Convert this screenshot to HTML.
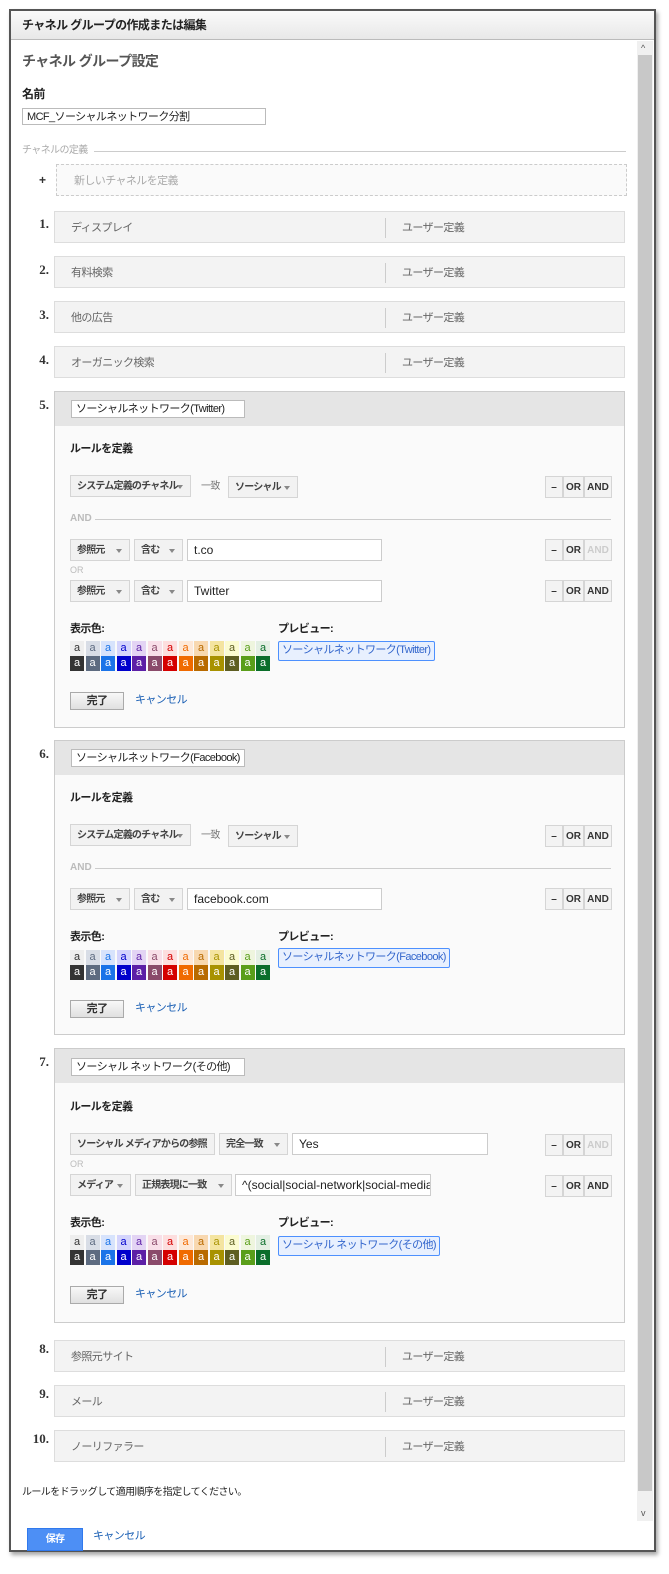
<!DOCTYPE html><html><head><meta charset="utf-8"><style>
*{box-sizing:border-box;margin:0;padding:0}
body{width:669px;height:1574px;background:#fff;font-family:"Liberation Sans","Noto Sans CJK JP",sans-serif;font-size:11px;line-height:1.15;color:#333;position:relative;overflow:hidden;letter-spacing:-0.6px}
.a{position:absolute;white-space:nowrap}
.dlg{left:9px;top:9px;width:647px;height:1543px;border:2px solid #555;background:#fff;box-shadow:2px 3px 4px rgba(0,0,0,.35)}
.hdr{left:11px;top:11px;width:643px;height:29px;background:linear-gradient(#fafafa,#e8e8e8);border-bottom:1px solid #bbb;font-weight:bold;font-size:12px;padding:8px 0 0 11px;color:#222}
.row{left:54px;width:571px;height:32px;background:#f3f3f3;border:1px solid #ddd;color:#666;font-size:11px}
.row .n{position:absolute;left:16px;top:10px}
.row .s{position:absolute;left:330px;top:6px;height:20px;border-left:1px solid #ccc}
.row .u{position:absolute;left:347px;top:10px}
.num{font-family:"Liberation Serif",serif;font-weight:bold;font-size:13px;color:#333;text-align:right;width:22px;left:27px;letter-spacing:0}
.box{left:54px;width:571px;border:1px solid #ccc;background:#fafafa}
.bh{position:absolute;left:0;top:0;width:100%;height:34px;background:#e5e5e5}
.inp{background:#fff;border:1px solid #bbb;padding-left:4px;font-size:11px;line-height:16px;color:#222;overflow:hidden}
.sel{background:#f2f2f2;border:1px solid #d5d5d5;font-weight:bold;font-size:10px;color:#444;padding:5px 0 0 6px;height:22px;overflow:hidden;letter-spacing:-0.8px}
.sel:after{content:"";position:absolute;right:7px;top:9px;border:3px solid transparent;border-top:4px solid #888}
.ti{background:#fff;border:1px solid #ccc;height:22px;padding:4px 0 0 6px;font-size:12px;color:#222;overflow:hidden;letter-spacing:0}
.b{background:#f3f3f3;border:1px solid #d5d5d5;height:22px;font-weight:bold;font-size:10px;text-align:center;padding-top:5px;color:#333;letter-spacing:0}
.lbl{font-weight:bold;font-size:11px;color:#222}
.gl{color:#bbb;font-weight:bold;font-size:10px;letter-spacing:0}
.sw{width:14px;height:15px;font-size:11px;text-align:center;line-height:14px;letter-spacing:0}
.pv{border:1px solid #4d90fe;background:#e8f0fe;color:#3366cc;font-size:11px;padding:2px 3px 0;height:20px;border-radius:2px}
.done{background:linear-gradient(#f8f8f8,#e0e0e0);border:1px solid #aaa;width:54px;height:18px;text-align:center;font-weight:bold;font-size:11px;padding-top:2px}
.lk{color:#1a5fb4}
</style></head><body>
<div class="a dlg"></div>
<div class="a hdr">チャネル グループの作成または編集</div>
<div class="a" style="left:637px;top:41px;width:16px;height:1480px;background:#f0f0f0"></div>
<div class="a" style="left:638px;top:55px;width:14px;height:1436px;background:#c8c8c8"></div>
<div class="a" style="left:641px;top:43px;font-size:9px;color:#555">^</div>
<div class="a" style="left:641px;top:1508px;font-size:9px;color:#555">v</div>

<div class="a" style="left:22px;top:53px;font-size:14px;font-weight:bold;color:#555">チャネル グループ設定</div>
<div class="a lbl" style="left:22px;top:88px;font-size:12px">名前</div>
<div class="a inp" style="left:22px;top:108px;width:244px;height:17px">MCF_ソーシャルネットワーク分割</div>
<div class="a" style="left:22px;top:145px;color:#aaa;font-size:10px">チャネルの定義</div>
<div class="a" style="left:94px;top:151px;width:532px;border-top:1px solid #ccc"></div>
<div class="a" style="left:39px;top:174px;font-weight:bold;font-size:12px">+</div>
<div class="a" style="left:56px;top:164px;width:571px;height:32px;border:1px dashed #ccc;background:#fafafa;color:#aaa;padding:10px 0 0 17px">新しいチャネルを定義</div>

<div class="a num" style="top:217px">1.</div><div class="a row" style="top:211px"><span class="n">ディスプレイ</span><span class="s"></span><span class="u">ユーザー定義</span></div>
<div class="a num" style="top:263px">2.</div><div class="a row" style="top:256px"><span class="n">有料検索</span><span class="s"></span><span class="u">ユーザー定義</span></div>
<div class="a num" style="top:308px">3.</div><div class="a row" style="top:301px"><span class="n">他の広告</span><span class="s"></span><span class="u">ユーザー定義</span></div>
<div class="a num" style="top:353px">4.</div><div class="a row" style="top:346px"><span class="n">オーガニック検索</span><span class="s"></span><span class="u">ユーザー定義</span></div>

<!-- 5 -->
<div class="a num" style="top:398px">5.</div>
<div class="a box" style="top:391px;height:337px"><div class="bh"></div></div>
<div class="a inp" style="left:71px;top:400px;width:174px;height:18px">ソーシャルネットワーク(Twitter)</div>
<div class="a lbl" style="left:70px;top:443px">ルールを定義</div>
<div class="a sel" style="left:70px;top:475px;width:121px">システム定義のチャネル</div>
<div class="a" style="left:201px;top:481px;color:#777;font-size:10px">一致</div>
<div class="a sel" style="left:228px;top:476px;width:70px">ソーシャル</div>
<div class="a b" style="left:545px;top:476px;width:18px">–</div><div class="a b" style="left:563px;top:476px;width:21px">OR</div><div class="a b" style="left:584px;top:476px;width:28px">AND</div>
<div class="a gl" style="left:70px;top:513px">AND</div><div class="a" style="left:95px;top:519px;width:516px;border-top:1px solid #ccc"></div>
<div class="a sel" style="left:70px;top:539px;width:60px">参照元</div>
<div class="a sel" style="left:134px;top:539px;width:49px">含む</div>
<div class="a ti" style="left:187px;top:539px;width:195px">t.co</div>
<div class="a b" style="left:545px;top:539px;width:18px">–</div><div class="a b" style="left:563px;top:539px;width:21px">OR</div><div class="a b" style="left:584px;top:539px;width:28px;color:#ccc">AND</div>
<div class="a gl" style="left:70px;top:565px;font-weight:normal;font-size:9px">OR</div>
<div class="a sel" style="left:70px;top:580px;width:60px">参照元</div>
<div class="a sel" style="left:134px;top:580px;width:49px">含む</div>
<div class="a ti" style="left:187px;top:580px;width:195px">Twitter</div>
<div class="a b" style="left:545px;top:580px;width:18px">–</div><div class="a b" style="left:563px;top:580px;width:21px">OR</div><div class="a b" style="left:584px;top:580px;width:28px">AND</div>
<div class="a lbl" style="left:70px;top:623px">表示色:</div>
<div class="a lbl" style="left:278px;top:623px">プレビュー:</div>
<div class="a pv" style="left:278px;top:641px">ソーシャルネットワーク(Twitter)</div>
<div class="a sws" style="left:70px;top:641px"></div>
<div class="a done" style="left:70px;top:692px">完了</div><div class="a lk" style="left:135px;top:694px">キャンセル</div>

<!-- 6 -->
<div class="a num" style="top:747px">6.</div>
<div class="a box" style="top:740px;height:295px"><div class="bh"></div></div>
<div class="a inp" style="left:71px;top:749px;width:174px;height:18px">ソーシャルネットワーク(Facebook)</div>
<div class="a lbl" style="left:70px;top:792px">ルールを定義</div>
<div class="a sel" style="left:70px;top:824px;width:121px">システム定義のチャネル</div>
<div class="a" style="left:201px;top:830px;color:#777;font-size:10px">一致</div>
<div class="a sel" style="left:228px;top:825px;width:70px">ソーシャル</div>
<div class="a b" style="left:545px;top:825px;width:18px">–</div><div class="a b" style="left:563px;top:825px;width:21px">OR</div><div class="a b" style="left:584px;top:825px;width:28px">AND</div>
<div class="a gl" style="left:70px;top:862px">AND</div><div class="a" style="left:95px;top:868px;width:516px;border-top:1px solid #ccc"></div>
<div class="a sel" style="left:70px;top:888px;width:60px">参照元</div>
<div class="a sel" style="left:134px;top:888px;width:49px">含む</div>
<div class="a ti" style="left:187px;top:888px;width:195px">facebook.com</div>
<div class="a b" style="left:545px;top:888px;width:18px">–</div><div class="a b" style="left:563px;top:888px;width:21px">OR</div><div class="a b" style="left:584px;top:888px;width:28px">AND</div>
<div class="a lbl" style="left:70px;top:931px">表示色:</div>
<div class="a lbl" style="left:278px;top:931px">プレビュー:</div>
<div class="a pv" style="left:278px;top:948px">ソーシャルネットワーク(Facebook)</div>
<div class="a sws" style="left:70px;top:950px"></div>
<div class="a done" style="left:70px;top:1000px">完了</div><div class="a lk" style="left:135px;top:1002px">キャンセル</div>

<!-- 7 -->
<div class="a num" style="top:1055px">7.</div>
<div class="a box" style="top:1048px;height:275px"><div class="bh"></div></div>
<div class="a inp" style="left:71px;top:1058px;width:174px;height:18px">ソーシャル ネットワーク(その他)</div>
<div class="a lbl" style="left:70px;top:1101px">ルールを定義</div>
<div class="a sel" style="left:70px;top:1133px;width:145px">ソーシャル メディアからの参照</div>
<div class="a sel" style="left:219px;top:1133px;width:69px">完全一致</div>
<div class="a ti" style="left:292px;top:1133px;width:196px">Yes</div>
<div class="a b" style="left:545px;top:1134px;width:18px">–</div><div class="a b" style="left:563px;top:1134px;width:21px">OR</div><div class="a b" style="left:584px;top:1134px;width:28px;color:#ccc">AND</div>
<div class="a gl" style="left:70px;top:1159px;font-weight:normal;font-size:9px">OR</div>
<div class="a sel" style="left:70px;top:1174px;width:61px">メディア</div>
<div class="a sel" style="left:135px;top:1174px;width:97px">正規表現に一致</div>
<div class="a ti" style="left:235px;top:1174px;width:196px">^(social|social-network|social-media</div>
<div class="a b" style="left:545px;top:1175px;width:18px">–</div><div class="a b" style="left:563px;top:1175px;width:21px">OR</div><div class="a b" style="left:584px;top:1175px;width:28px">AND</div>
<div class="a lbl" style="left:70px;top:1217px">表示色:</div>
<div class="a lbl" style="left:278px;top:1217px">プレビュー:</div>
<div class="a pv" style="left:278px;top:1236px">ソーシャル ネットワーク(その他)</div>
<div class="a sws" style="left:70px;top:1235px"></div>
<div class="a done" style="left:70px;top:1286px">完了</div><div class="a lk" style="left:135px;top:1288px">キャンセル</div>

<div class="a num" style="top:1342px">8.</div><div class="a row" style="top:1340px"><span class="n">参照元サイト</span><span class="s"></span><span class="u">ユーザー定義</span></div>
<div class="a num" style="top:1387px">9.</div><div class="a row" style="top:1385px"><span class="n">メール</span><span class="s"></span><span class="u">ユーザー定義</span></div>
<div class="a num" style="top:1432px;left:22px;width:27px">10.</div><div class="a row" style="top:1430px"><span class="n">ノーリファラー</span><span class="s"></span><span class="u">ユーザー定義</span></div>

<div class="a" style="left:22px;top:1487px;font-size:10px;color:#222">ルールをドラッグして適用順序を指定してください。</div>
<div class="a" style="left:27px;top:1528px;width:56px;height:23px;background:#4d8ff5;border:1px solid #3079ed;color:#fff;font-weight:bold;font-size:10px;text-align:center;padding-top:5px">保存</div>
<div class="a lk" style="left:93px;top:1530px">キャンセル</div>

<script>
var tbg=["#eee","#d8dde6","#d7e3fc","#d4d4fc","#e3d4f4","#f8dfe8","#fddede","#fde8d8","#f8d8b0","#f4e4a0","#fbfbd0","#eef5de","#e3efe3"];
var dc=["#333","#5d6b80","#1a73e8","#0000cc","#5c1fa6","#8a4a6a","#d40000","#f06a00","#b86a00","#a89200","#5e5e22","#5a9e1a","#0a6e2a"];
document.querySelectorAll('.sws').forEach(function(e){var h='';for(var i=0;i<13;i++){h+='<div class="a sw" style="left:'+(i*15.5)+'px;top:0;background:'+tbg[i]+';color:'+dc[i]+'">a</div><div class="a sw" style="left:'+(i*15.5)+'px;top:15px;background:'+dc[i]+';color:#fff">a</div>';}e.innerHTML=h;});
</script>
</body></html>
